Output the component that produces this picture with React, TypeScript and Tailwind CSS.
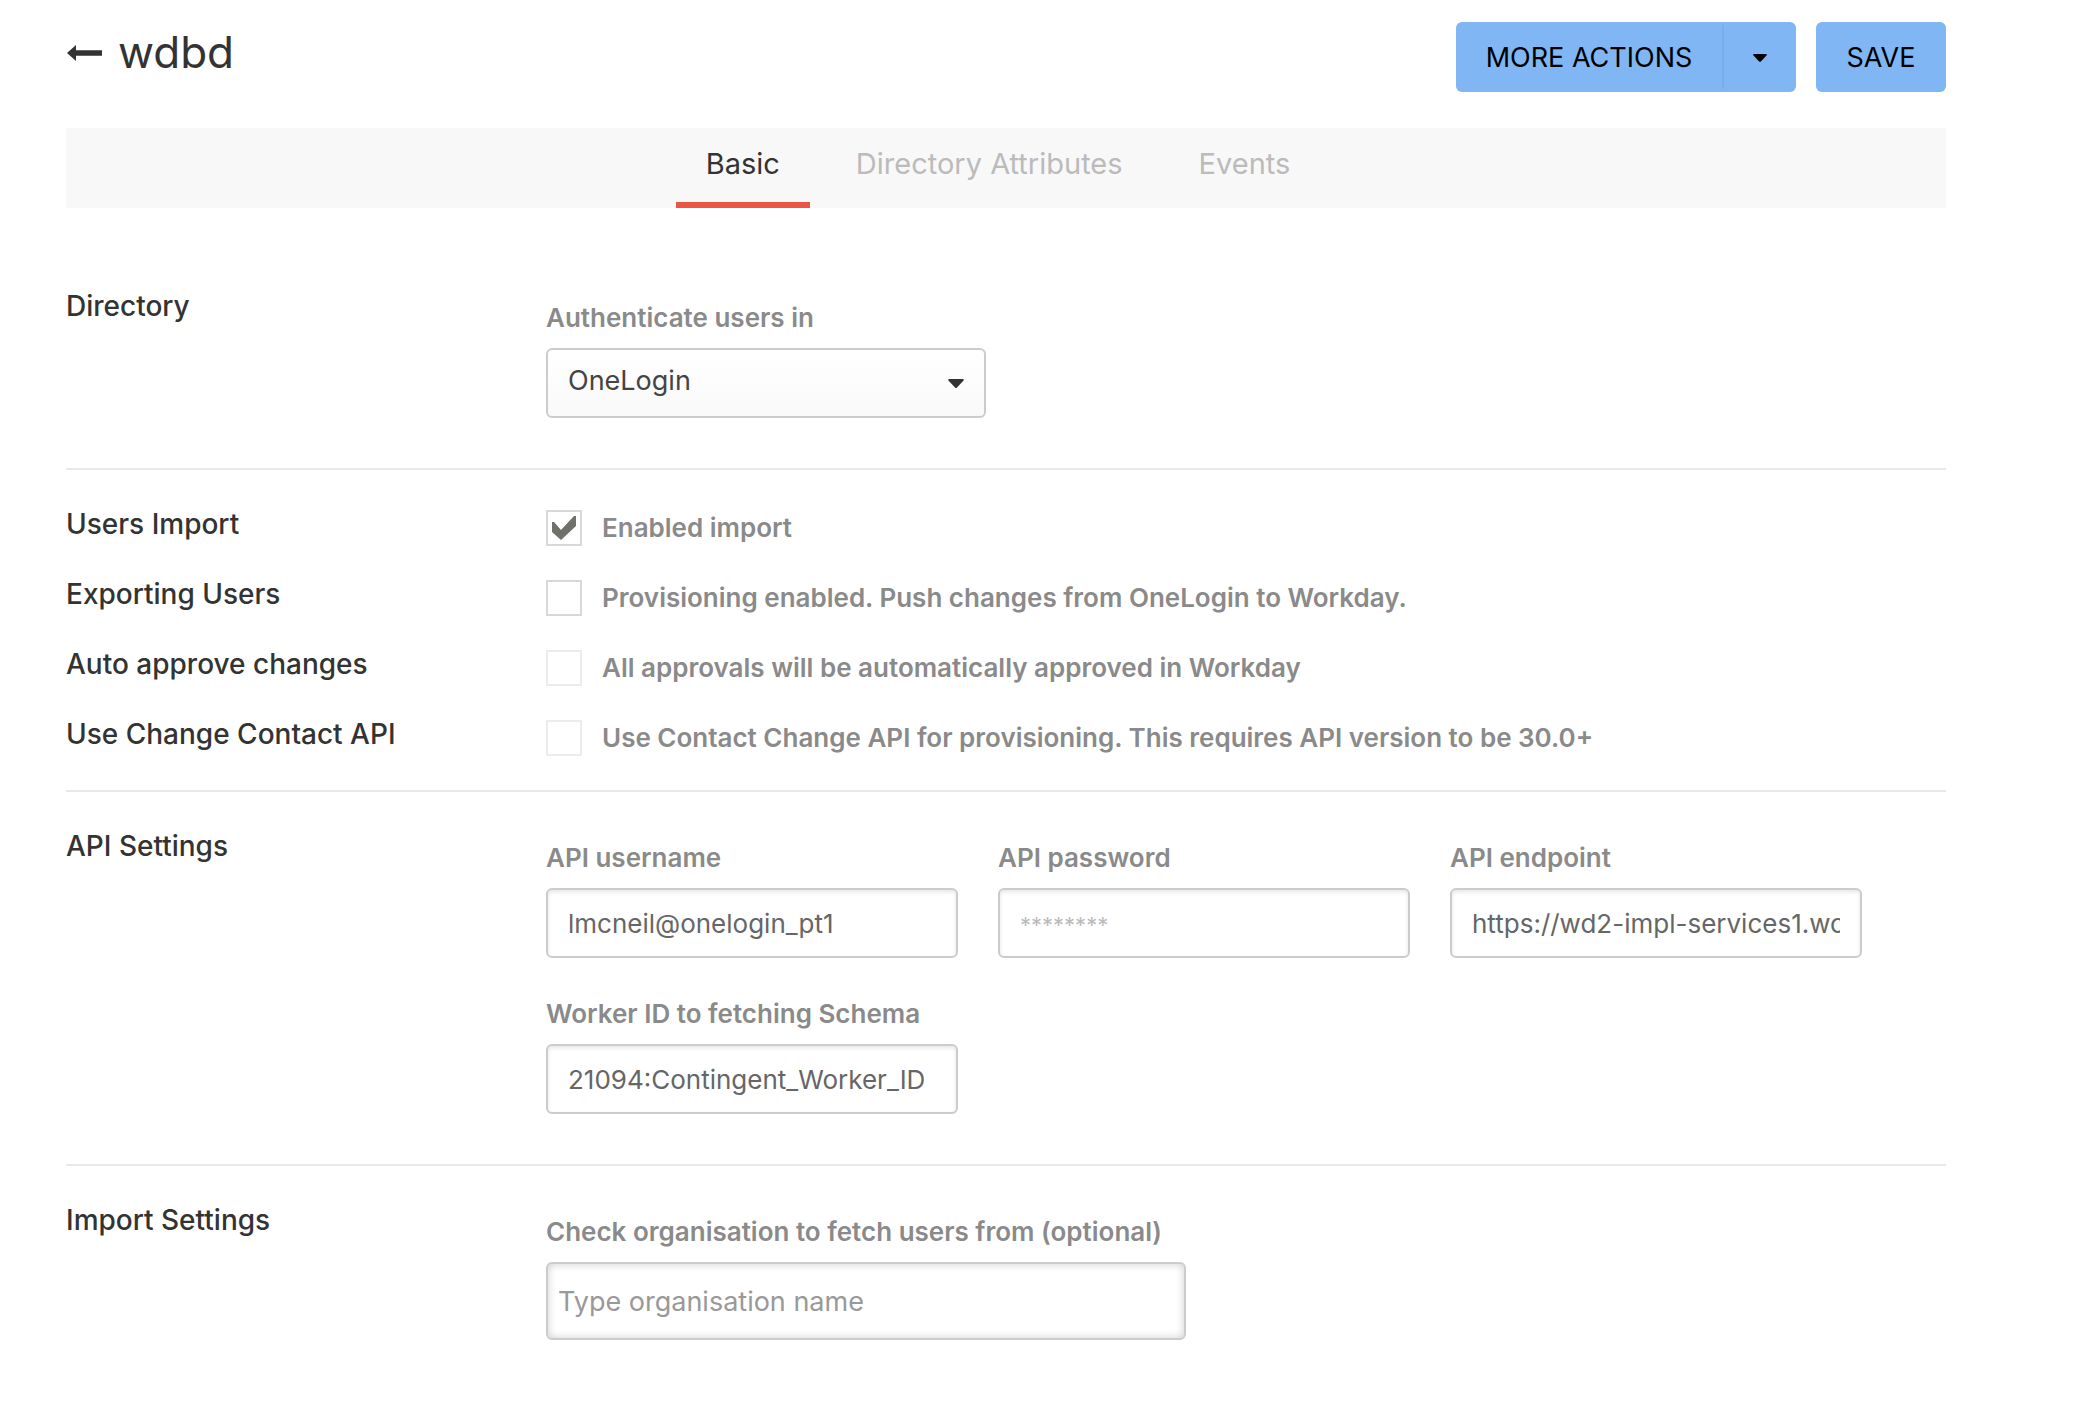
import type { InputHTMLAttributes, ReactNode } from "react";

const tabs = ["Basic", "Directory Attributes", "Events"];

const options = [
  { id: "import", title: "Users Import", text: "Enabled import", checked: true, disabled: false },
  {
    id: "export",
    title: "Exporting Users",
    text: "Provisioning enabled. Push changes from OneLogin to Workday.",
    checked: false,
    disabled: false,
  },
  {
    id: "approve",
    title: "Auto approve changes",
    text: "All approvals will be automatically approved in Workday",
    checked: false,
    disabled: true,
  },
  {
    id: "contact",
    title: "Use Change Contact API",
    text: "Use Contact Change API for provisioning. This requires API version to be 30.0+",
    checked: false,
    disabled: true,
  },
];

function Caret({ className }: { className: string }) {
  return (
    <svg viewBox="0 0 16 9" className={className} fill="currentColor" aria-hidden="true">
      <path d="M1 0h14q1.4.6.4 1.7L9 8.4q-1 1-2 0L.6 1.7Q-.4.6 1 0z" />
    </svg>
  );
}

function Section({ title, children }: { title: string; children: ReactNode }) {
  return (
    <section className="grid grid-cols-[480px_1fr] border-b-2 border-[#e8e8e8] pt-[38px] pb-[50px] last:border-b-0">
      <h2 className="text-[28px] leading-8 font-medium text-[#333]">{title}</h2>
      <div className="pt-3">{children}</div>
    </section>
  );
}

function Field({ id, label, ...rest }: { id: string; label: string } & InputHTMLAttributes<HTMLInputElement>) {
  return (
    <div>
      <label htmlFor={id} className="mb-3.5 block text-[26px] leading-8 font-semibold text-[#8a8a8a]">
        {label}
      </label>
      <input
        id={id}
        className="h-[70px] w-full rounded-md border-2 border-[#ccc] bg-white px-5 text-[26px] text-[#666] shadow-[inset_0_2px_4px_rgba(0,0,0,0.1)] outline-none placeholder:text-[22px] placeholder:text-[#bbb]"
        {...rest}
      />
    </div>
  );
}

export default function App() {
  return (
    <main className="min-h-screen bg-white pt-[22px] pr-[152px] pb-4 pl-[66px] font-['Inter',sans-serif]">
      <header className="flex items-start justify-between">
        <div className="flex items-center gap-4 pt-1.5">
          <a href="#apps" aria-label="Back" className="pt-0.5">
            <svg viewBox="0 0 36 16" className="h-4 w-9" fill="#333" aria-hidden="true">
              <path d="M1 8l9-8v5.2h26v5.6H10V16z" />
            </svg>
          </a>
          <h1 className="text-[44px] leading-12 text-[#333]">wdbd</h1>
        </div>
        <div className="flex gap-5">
          <div className="flex h-[70px] items-center rounded-md bg-[#80b6f3] text-black">
            <button className="h-full w-[266px] pt-0.5 text-[27px]">MORE ACTIONS</button>
            <button aria-label="Open actions" className="flex h-16 w-[74px] items-center justify-center border-l-2 border-[#78aee9] pt-0.5">
              <Caret className="h-2 w-3.5" />
            </button>
          </div>
          <button className="h-[70px] w-[130px] rounded-md bg-[#80b6f3] pt-0.5 text-[27px] text-black">SAVE</button>
        </div>
      </header>

      <nav className="mt-9 mb-11 flex h-20 justify-center gap-4 bg-[#f8f8f8] pr-4">
        {tabs.map((tab, i) => (
          <a
            key={tab}
            href="#"
            className={
              i === 0
                ? "border-b-6 border-[#ec5444] px-[30px] pt-5 text-[29px] leading-8 text-[#333]"
                : "px-[30px] pt-5 text-[29px] leading-8 text-[#bbb]"
            }
          >
            {tab}
          </a>
        ))}
      </nav>

      <Section title="Directory">
        <label htmlFor="directory" className="mb-3.5 block text-[26px] leading-8 font-semibold text-[#8a8a8a]">
          Authenticate users in
        </label>
        <div className="grid w-[440px] items-center">
          <select
            id="directory"
            className="col-start-1 row-start-1 h-[70px] appearance-none rounded-md border-2 border-[#ccc] bg-linear-to-b from-white to-[#f9f9f9] px-5 pb-1 text-[27px] text-[#444] outline-none"
          >
            <option>OneLogin</option>
          </select>
          <Caret className="pointer-events-none col-start-1 row-start-1 mr-[22px] h-[9px] w-4 justify-self-end text-[#333]" />
        </div>
      </Section>

      <section className="grid gap-8 border-b-2 border-[#e8e8e8] pt-[38px] pb-[34px]">
        {options.map((option) => (
          <div key={option.id} className="grid grid-cols-[480px_1fr]">
            <h2 className="text-[28px] leading-8 font-medium text-[#333]">{option.title}</h2>
            <div className="flex items-center gap-5 pt-0.5">
              <span className="grid size-9">
                <input
                  id={option.id}
                  type="checkbox"
                  defaultChecked={option.checked}
                  disabled={option.disabled}
                  className="peer col-start-1 row-start-1 size-9 appearance-none border-2 border-[#d8d8d8] bg-white disabled:border-[#ececec]"
                />
                <svg
                  viewBox="0 0 36 36"
                  className="pointer-events-none invisible col-start-1 row-start-1 size-9 peer-checked:visible"
                  fill="#706f6a"
                  aria-hidden="true"
                >
                  <path d="M6 12h2l7 8L28 6h2v10L15 30 6 22z" />
                </svg>
              </span>
              <label htmlFor={option.id} className="text-[26px] leading-8 font-semibold text-[#8a8a8a]">
                {option.text}
              </label>
            </div>
          </div>
        ))}
      </section>

      <Section title="API Settings">
        <div className="grid grid-cols-3 gap-10 pr-[84px]">
          <Field id="username" label="API username" defaultValue="lmcneil@onelogin_pt1" />
          <Field id="password" label="API password" placeholder="********" />
          <Field id="endpoint" label="API endpoint" defaultValue="https://wd2-impl-services1.workday.com" />
          <Field id="worker" label="Worker ID to fetching Schema" defaultValue="21094:Contingent_Worker_ID" />
        </div>
      </Section>

      <Section title="Import Settings">
        <label htmlFor="organisation" className="mb-3.5 block text-[26px] leading-8 font-semibold text-[#8a8a8a]">
          Check organisation to fetch users from (optional)
        </label>
        <input
          id="organisation"
          placeholder="Type organisation name"
          className="h-[78px] w-[640px] rounded-md border-2 border-[#ccc] px-2.5 text-[27px] shadow-[inset_0_0_8px_rgba(0,0,0,0.2)] outline-none placeholder:text-[#999]"
        />
      </Section>
    </main>
  );
}
